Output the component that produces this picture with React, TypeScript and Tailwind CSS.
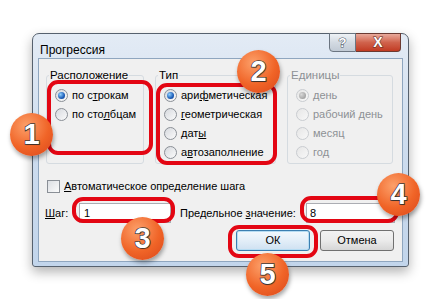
import React from "react"

const font = { fontFamily: '"Liberation Sans", Arial, sans-serif' }

const Radio = ({ checked = false, disabled = false }: { checked?: boolean; disabled?: boolean }) => (
  <span
    className={
      "w-[13px] h-[13px] shrink-0 rounded-full border flex items-center justify-center " +
      (disabled
        ? "border-[#c9ccd0] bg-gradient-to-br from-[#e6e6e6] to-[#f8f8f8]"
        : "border-[#8a8f96] bg-gradient-to-br from-[#d6d9de] to-[#fbfbfb]")
    }
  >
    {checked && (
      <span
        className={
          "w-[7px] h-[7px] rounded-full " +
          (disabled
            ? "bg-[radial-gradient(circle_at_35%_35%,#d8d8d8,#8f8f8f)]"
            : "bg-[radial-gradient(circle_at_35%_35%,#8fd0ff,#1c5db8_60%,#0d3d80)]")
        }
      />
    )}
  </span>
)

const Option = ({
  children,
  checked,
  disabled,
}: {
  children: React.ReactNode
  checked?: boolean
  disabled?: boolean
}) => (
  <div className="h-[19px] flex items-center gap-[4px] whitespace-nowrap">
    <Radio checked={checked} disabled={disabled} />
    <span className={disabled ? "text-[#8d9095]" : "text-black"}>{children}</span>
  </div>
)

const Group = ({
  title,
  width,
  disabled,
  children,
}: {
  title: string
  width: string
  disabled?: boolean
  children: React.ReactNode
}) => (
  <fieldset className={"border border-[#d5dbe0] rounded-[3px] h-[96px] " + width}>
    <legend className={"ml-[2px] px-[1px] leading-[14px] text-[11.5px] " + (disabled ? "text-[#8d9095]" : "text-black")}>
      {title}
    </legend>
    <div className="pt-[4px] pl-[8px]">{children}</div>
  </fieldset>
)

const Outline = ({ className }: { className: string }) => (
  <div className={"absolute border-[4px] border-[#e30613] rounded-[11px] " + className} />
)

const Badge = ({ n, className }: { n: number; className: string }) => (
  <div
    className={
      "absolute w-[43px] h-[43px] rounded-full flex items-center justify-center bg-[radial-gradient(circle_at_38%_30%,#fca06a,#f06427_55%,#d9461b)] shadow-[1px_3px_4px_rgba(0,0,0,0.35)] " +
      className
    }
  >
    <span className="text-white font-bold text-[29px] leading-none [-webkit-text-stroke:1.5px_#3b3b3b] [paint-order:stroke_fill] [text-shadow:1px_1px_1px_rgba(0,0,0,0.3)]">
      {n}
    </span>
  </div>
)

export default function App() {
  return (
    <div className="relative w-[441px] h-[299px] bg-white overflow-hidden text-[11px]" style={font}>
      <div className="pl-[32px] pt-[33px]">
        <div className="w-[377px] h-[234px] border border-[#56616e] rounded-t-[7px] rounded-b-[3px] bg-gradient-to-b from-[#e3ebf5] via-[#cddcee] to-[#c2d5eb] shadow-[0_5px_12px_rgba(0,0,0,0.3)] flex flex-col px-[5px] pb-[4px]">
          <div className="h-[24px] flex items-start justify-between">
            <span className="pt-[7px] pl-[2px] text-[12px] text-black">Прогрессия</span>
            <div className="flex mr-[2px] -mt-[1px]">
              <div className="w-[27px] h-[19px] border border-[#6b7581] rounded-bl-[4px] bg-gradient-to-b from-[#eef2f6] via-[#d3dae2] to-[#c1cad5] flex items-center justify-center text-white font-bold text-[13px] [-webkit-text-stroke:1px_#4a5563] [paint-order:stroke_fill]">
                ?
              </div>
              <div className="w-[45px] h-[19px] border border-l-0 border-[#6b3a32] rounded-br-[4px] bg-gradient-to-b from-[#e8a99b] via-[#d0624c] to-[#c13a22] flex items-center justify-center text-white font-bold text-[14px] [-webkit-text-stroke:1px_#5a2a22] [paint-order:stroke_fill]">
                X
              </div>
            </div>
          </div>
          <div className="flex-1 bg-[#f0f0f0] border border-[#8fa6bf] px-[7px] pt-[9px]">
            <div className="flex gap-[11px]">
              <Group title="Расположение" width="w-[98px]">
                <Option checked>
                  по с<u>т</u>рокам
                </Option>
                <Option>
                  по сто<u>л</u>бцам
                </Option>
              </Group>
              <Group title="Тип" width="w-[121px]">
                <Option checked>
                  ари<u>ф</u>метическая
                </Option>
                <Option>
                  <u>г</u>еометрическая
                </Option>
                <Option>
                  дат<u>ы</u>
                </Option>
                <Option>
                  а<u>в</u>тозаполнение
                </Option>
              </Group>
              <Group title="Единицы" width="w-[106px]" disabled>
                <Option checked disabled>
                  день
                </Option>
                <Option disabled>рабочий день</Option>
                <Option disabled>месяц</Option>
                <Option disabled>год</Option>
              </Group>
            </div>
            <div className="mt-[15px] h-[14px] flex items-center gap-[4px] pl-[1px]">
              <span className="w-[13px] h-[13px] border border-[#8a8f96] bg-gradient-to-br from-[#dcdfe3] to-[#fbfbfb]" />
              <span>
                <u>А</u>втоматическое определение шага
              </span>
            </div>
            <div className="mt-[10px] h-[20px] flex items-center whitespace-nowrap">
              <span className="w-[34px] -ml-[1px]">
                <u>Ш</u>аг:
              </span>
              <div className="w-[92px] h-[20px] border border-[#abadb3] bg-white flex items-center pl-[4px]">1</div>
              <span className="ml-[9px] w-[126px]">
                Предельное <u>з</u>начение:
              </span>
              <div className="w-[89px] h-[20px] border border-[#abadb3] bg-white flex items-center pl-[3px]">8</div>
            </div>
            <div className="mt-[7px] flex justify-end gap-[10px] pr-[1px]">
              <button className="w-[74px] h-[21px] border border-[#3c7fb1] rounded-[3px] bg-gradient-to-b from-[#f2f8fd] via-[#e3eef8] to-[#cfe1f1] shadow-[inset_0_0_0_1px_#b6dcf3]">
                ОК
              </button>
              <button className="w-[74px] h-[21px] border border-[#707070] rounded-[3px] bg-gradient-to-b from-[#f2f2f2] via-[#ebebeb] to-[#d6d6d6]">
                Отмена
              </button>
            </div>
          </div>
        </div>
      </div>

      <Outline className="left-[47px] top-[80px] w-[106px] h-[75px]" />
      <Outline className="left-[156px] top-[83px] w-[121px] h-[82px]" />
      <Outline className="left-[72px] top-[197px] w-[103px] h-[26px]" />
      <Outline className="left-[300px] top-[196px] w-[99px] h-[27px]" />
      <Outline className="left-[228px] top-[225px] w-[90px] h-[33px]" />

      <Badge n={1} className="left-[10px] top-[113px]" />
      <Badge n={2} className="left-[237px] top-[50px]" />
      <Badge n={3} className="left-[121px] top-[217px]" />
      <Badge n={4} className="left-[377px] top-[173px]" />
      <Badge n={5} className="left-[246px] top-[253px]" />
    </div>
  )
}
